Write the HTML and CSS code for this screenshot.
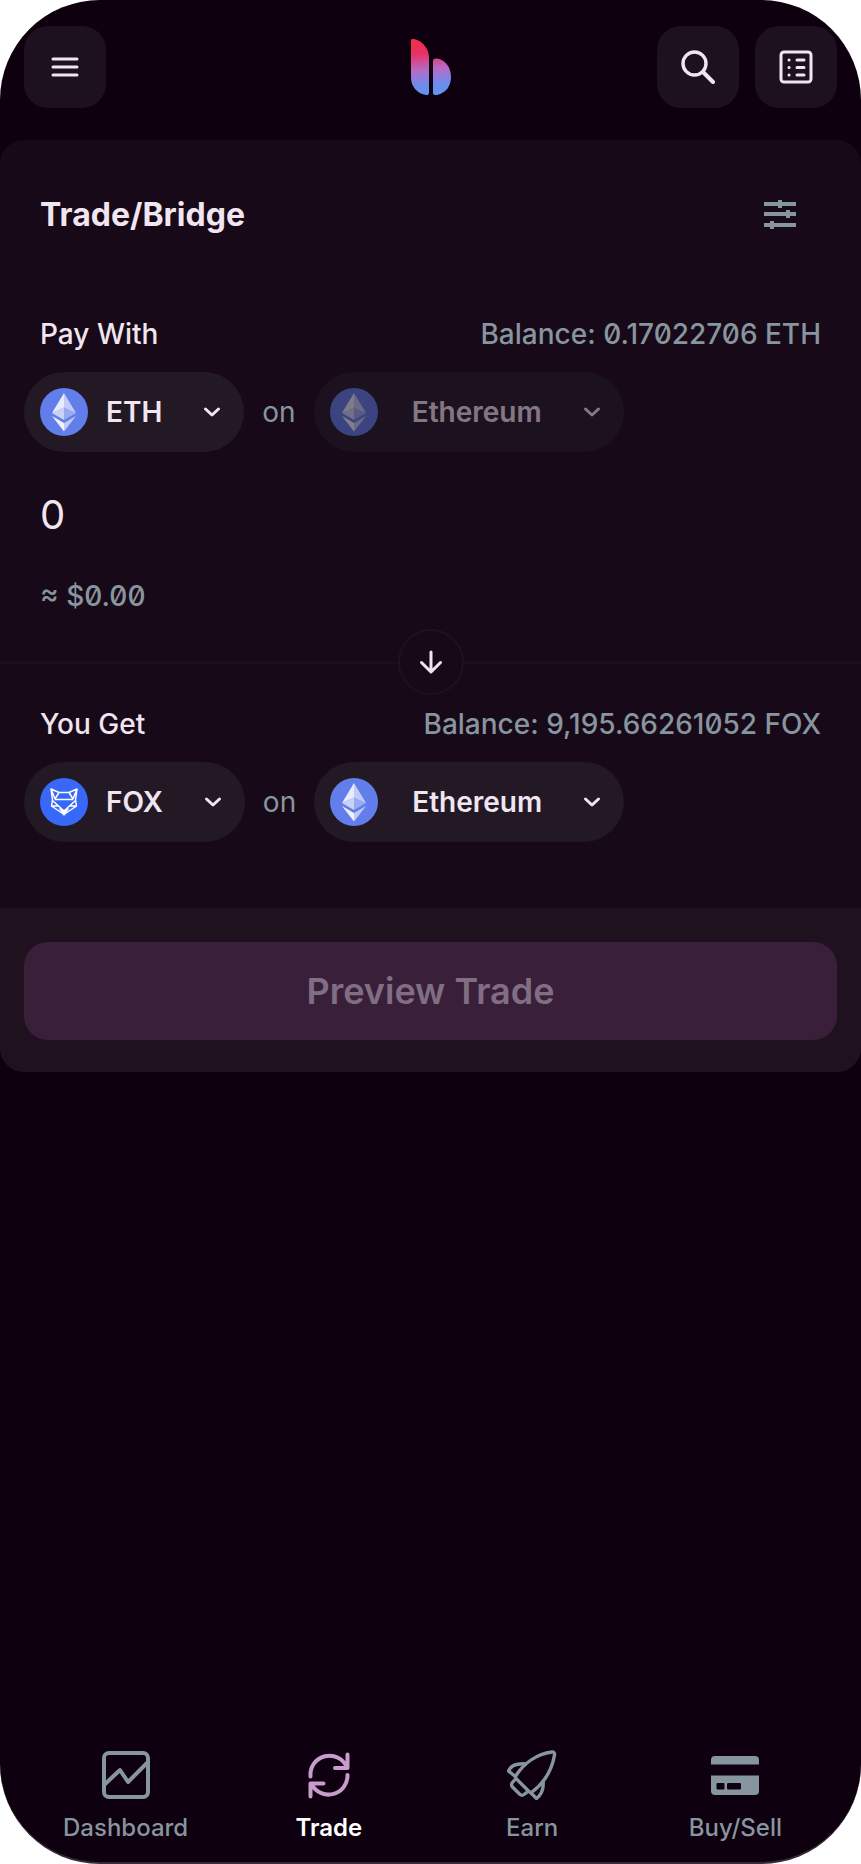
FILE: index.html
```html
<!DOCTYPE html>
<html lang="en">

<head>
  <meta charset="UTF-8" />
  <meta name="viewport" content="width=device-width, initial-scale=1.0" />
  <title>Trade/Bridge</title>
  <link rel="stylesheet" href="styles.css">
</head>

<body>
  <!-- shared symbols -->
  <svg class="symbols" width="0" height="0" aria-hidden="true">
    <symbol id="eth" viewBox="0 0 48 48">
      <circle cx="24" cy="24" r="24" fill="#627eea" />
      <path d="M24 5v14.500L12 25z" fill="#fff" fill-opacity=".85" />
      <path d="M24 5l12 20-12-5.500z" fill="#fff" fill-opacity=".6" />
      <path d="M24 19.500V32L12 25z" fill="#fff" fill-opacity=".65" />
      <path d="M24 19.500L36 25l-12 7z" fill="#fff" fill-opacity=".35" />
      <path d="M12 28l12 7v8.500z" fill="#fff" fill-opacity=".9" />
      <path d="M36 28l-12 7v8.500z" fill="#fff" fill-opacity=".6" />
    </symbol>
    <symbol id="fox" viewBox="0 0 48 48">
      <circle cx="24" cy="24" r="24" fill="#3768f8" />
      <path d="M11 11l8 3.500h10L37 11l-1.500 11 1 6L24 36.500 11.500 28l1-6zM11 11l4 10 4-6.500M37 11l-4 10-4-6.500M15 21.500h18M12.500 22.500L24 33l11.500-10.500M11.500 28l7 0M36.500 28l-7 0" fill="none" stroke="#fff" stroke-width="1.500" stroke-linejoin="round" />
      <path d="M18.500 30l5.500 2 5.500-2-5.500 8z" fill="#fff" />
    </symbol>
    <symbol id="chevron" viewBox="0 0 32 32">
      <path d="M9.500 13l6.500 6 6.500-6" fill="none" stroke="currentColor" stroke-width="3" stroke-linecap="round" stroke-linejoin="round" />
    </symbol>
  </svg>

  <div class="app">

    <header class="header">
      <div class="header-side">
        <button class="icon-btn" aria-label="Menu">
          <svg width="32" height="32" viewBox="0 0 32 32" fill="none" stroke="currentColor" stroke-width="3" stroke-linecap="round">
            <path d="M4 8h24M4 16h24M4 24h24" />
          </svg>
        </button>
      </div>
      <a class="logo" href="#" aria-label="Home">
        <svg width="42" height="58" viewBox="0 0 42 58">
          <defs>
            <linearGradient id="logo-fill" gradientUnits="userSpaceOnUse" x1="14" y1="0" x2="20" y2="58">
              <stop offset="0" stop-color="#f0304a" />
              <stop offset=".25" stop-color="#e83060" />
              <stop offset=".55" stop-color="#b56cc8" />
              <stop offset=".8" stop-color="#6e8bee" />
              <stop offset="1" stop-color="#5a96f0" />
            </linearGradient>
          </defs>
          <path d="M1 2q0-1.500 3-1C13 3 19 11 19 20v35q0 2-3 2C8 56 1 49 1 40z" fill="url(#logo-fill)" />
          <path d="M23 23q0-3 4-2.500C36 22 41 30 41 39s-5 16-14 18q-4 .500-4-2z" fill="url(#logo-fill)" />
        </svg>
      </a>
      <div class="header-side header-right">
        <button class="icon-btn" aria-label="Search">
          <svg width="34" height="34" viewBox="0 0 34 34" fill="none" stroke="currentColor" stroke-linecap="round">
            <circle cx="13.500" cy="13.500" r="11.500" stroke-width="3.400" />
            <path d="M22 22l10 10" stroke-width="4" />
          </svg>
        </button>
        <button class="icon-btn" aria-label="Activity">
          <svg width="34" height="34" viewBox="0 0 34 34" fill="none" stroke="currentColor" stroke-linecap="round">
            <rect x="2" y="2" width="30" height="30" rx="3" stroke-width="3" />
            <path d="M18 10h7M18 17.500h7M18 25h7" stroke-width="3" />
            <path d="M10 10h.1M10 17.500h.1M10 25h.1" stroke-width="3" />
          </svg>
        </button>
      </div>
    </header>

    <main class="card">
      <div class="card-head">
        <h1>Trade/Bridge</h1>
        <button class="settings" aria-label="Trade settings">
          <svg width="34" height="32" viewBox="0 0 34 32" fill="none" stroke="currentColor" stroke-width="4">
            <path d="M1 5h32M1 15h32M1 26h32" />
            <path d="M17 1v8M25 11v8M9 22v8" stroke-linecap="butt" />
          </svg>
        </button>
      </div>

      <!-- sell side -->
      <section class="side pay">
        <div class="side-head">
          <label for="amount">Pay With</label>
          <span class="balance">Balance: 0.17022706 ETH</span>
        </div>
        <div class="pickers">
          <button class="pill">
            <svg class="coin"><use href="#eth" /></svg>
            <span>ETH</span>
            <svg class="chevron"><use href="#chevron" /></svg>
          </button>
          <span class="on">on</span>
          <button class="pill chain" disabled>
            <svg class="coin"><use href="#eth" /></svg>
            <span>Ethereum</span>
            <svg class="chevron"><use href="#chevron" /></svg>
          </button>
        </div>
        <input class="amount" id="amount" type="text" inputmode="decimal" value="0">
        <p class="fiat">≈ $0.00</p>
        <button class="switch" aria-label="Switch assets">
          <svg width="24" height="24" viewBox="0 0 24 24" fill="none" stroke="currentColor" stroke-width="3" stroke-linecap="round" stroke-linejoin="round">
            <path d="M12 2v20M2.500 12.500L12 22l9.500-9.500" />
          </svg>
        </button>
      </section>

      <!-- buy side -->
      <section class="side get">
        <div class="side-head">
          <h2>You Get</h2>
          <span class="balance">Balance: 9,195.66261052 FOX</span>
        </div>
        <div class="pickers">
          <button class="pill">
            <svg class="coin"><use href="#fox" /></svg>
            <span>FOX</span>
            <svg class="chevron"><use href="#chevron" /></svg>
          </button>
          <span class="on">on</span>
          <button class="pill chain">
            <svg class="coin"><use href="#eth" /></svg>
            <span>Ethereum</span>
            <svg class="chevron"><use href="#chevron" /></svg>
          </button>
        </div>
      </section>

      <div class="card-foot">
        <button class="preview" disabled>Preview Trade</button>
      </div>
    </main>

    <nav class="tabs">
      <a class="tab" href="#">
        <svg width="50" height="50" viewBox="0 0 50 50" fill="none" stroke="currentColor" stroke-width="4" stroke-linejoin="round">
          <rect x="3" y="3" width="44" height="44" rx="5" />
          <path d="M3 35l16-15 8 12 20-20" />
        </svg>
        <span>Dashboard</span>
      </a>
      <a class="tab active" href="#">
        <svg width="50" height="50" viewBox="0 0 50 50" fill="none" stroke="currentColor" stroke-width="4" stroke-linecap="round" stroke-linejoin="round">
          <path d="M6.500 26.500A19 19 0 0 1 43 17.500M43.500 4.500V18H31" />
          <path d="M43.500 25A19 19 0 0 1 8 35M6.500 46.500V33.500H19.500" />
        </svg>
        <span>Trade</span>
      </a>
      <a class="tab" href="#">
        <svg width="50" height="50" viewBox="0 0 50 50" fill="none" stroke="currentColor" stroke-width="3.400" stroke-linejoin="round">
          <path d="M9 25.500C17 13 30 4 45 2q3 0 2.500 3C45 20 37 33 25 42q-1.500 1-3-.500L9 28.500q-1-1.500 0-3z" />
          <path d="M20 14C11 13 4 15 1.500 21L9 27M36 31c1 8-1 13-6.500 17.500L23 42" />
          <path d="M8 29.500L5 33q-1 2 0 3.500l8 8q2 1.500 4 0l4-3" />
        </svg>
        <span>Earn</span>
      </a>
      <a class="tab" href="#">
        <svg width="50" height="50" viewBox="0 0 50 50" fill="currentColor">
          <path d="M1 14.500V10q0-4 4-4h40q4 0 4 4v4.500z" />
          <path fill-rule="evenodd" d="M1 25.500h48V41q0 4-4 4H5q-4 0-4-4zM7.500 33q-1 0-1 1v4.500q0 1 1 1h6q1 0 1-1V34q0-1-1-1zM18.500 33q-1.500 0-1.500 1v4.500q0 1 1.500 1h11q1.500 0 1.500-1V34q0-1-1.500-1z" />
        </svg>
        <span>Buy/Sell</span>
      </a>
    </nav>

  </div>
</body>

</html>
```
FILE: styles.css
```css
* {
  margin: 0;
  padding: 0;
  box-sizing: border-box;
}

body {
  background: #fff;
  font-family: Inter, "Liberation Sans", sans-serif;
  font-size: 28px;
  font-optical-sizing: none;
  line-height: 40px;
  color: #f0e5f0;
}

button,
input {
  border: none;
  background: transparent;
  font: inherit;
  color: inherit;
}

button:not(:disabled) {
  cursor: pointer;
}

a {
  color: inherit;
  text-decoration: none;
}

svg {
  display: block;
  flex: none;
}

.symbols {
  position: absolute;
}

.app {
  display: flex;
  flex-direction: column;
  min-height: 100vh;
  background: #0e000e;
  border-bottom: 2px solid #332b35;
  border-radius: 100px;
  overflow: hidden;
}

/* header */
.header {
  display: flex;
  align-items: center;
  padding: 26px 24px 32px;
}

.header-side {
  display: flex;
  flex: 1;
  gap: 16px;
}

.header-right {
  justify-content: flex-end;
}

.icon-btn {
  display: flex;
  align-items: center;
  justify-content: center;
  width: 82px;
  height: 82px;
  border-radius: 24px;
  background: #1d111f;
}

/* trade card */
.card {
  background: #170917;
  border-radius: 24px;
  overflow: hidden;
}

.card-head {
  display: flex;
  align-items: center;
  justify-content: space-between;
  height: 150px;
  padding: 0 40px;
}

.card-head h1 {
  font-size: 32px;
  font-weight: 700;
}

.settings {
  padding: 24px;
  color: #87959f;
}

.side {
  position: relative;
  padding: 0 24px;
}

.pay {
  padding-top: 24px;
  padding-bottom: 46px;
  border-bottom: 2px solid #1c0e1d;
}

.get {
  padding-top: 40px;
  padding-bottom: 66px;
}

.side-head {
  display: flex;
  justify-content: space-between;
  padding: 0 16px;
  margin-bottom: 18px;
}

.side-head h2,
.side-head label {
  font-size: 28px;
  font-weight: 500;
}

.balance,
.fiat,
.on {
  color: #87959f;
}

.balance,
.fiat {
  font-weight: 500;
  font-feature-settings: "zero";
}

.pickers {
  display: flex;
  align-items: center;
  gap: 18px;
}

.pill {
  display: flex;
  align-items: center;
  height: 80px;
  padding: 0 16px;
  border-radius: 40px;
  background: #221925;
  font-weight: 600;
}

.pill span {
  margin: 0 34px 0 18px;
}

.pill.chain span {
  margin-left: 34px;
}

.pill:disabled {
  opacity: 0.5;
}

.coin {
  width: 48px;
  height: 48px;
}

.chevron {
  width: 32px;
  height: 32px;
}

.amount {
  display: block;
  width: 100%;
  height: 80px;
  margin-top: 22px;
  padding: 0 16px;
  outline: none;
  font-size: 40px;
}

.fiat {
  margin-top: 22px;
  padding: 0 16px;
}

/* sits on the line between both sides */
.switch {
  position: absolute;
  left: 50%;
  bottom: -33px;
  display: flex;
  align-items: center;
  justify-content: center;
  width: 66px;
  height: 66px;
  margin-left: -33px;
  border: 2px solid #1f1220;
  border-radius: 50%;
  background: #170917;
  z-index: 1;
}

.card-foot {
  padding: 34px 24px 32px;
  background: #1f111d;
}

.preview {
  width: 100%;
  height: 98px;
  border-radius: 24px;
  background: #3a1f3b;
  color: #806f83;
  font-size: 36px;
  font-weight: 600;
}

/* bottom tabs */
.tabs {
  display: flex;
  margin-top: auto;
  padding: 0 24px 18px;
}

.tab {
  display: flex;
  flex: 1;
  flex-direction: column;
  align-items: center;
  gap: 12px;
  color: #87959f;
  font-size: 24px;
  font-weight: 500;
  line-height: 32px;
}

.tab.active {
  color: #c99bcf;
}

.tab.active span {
  color: #fff;
  font-weight: 600;
}
```
